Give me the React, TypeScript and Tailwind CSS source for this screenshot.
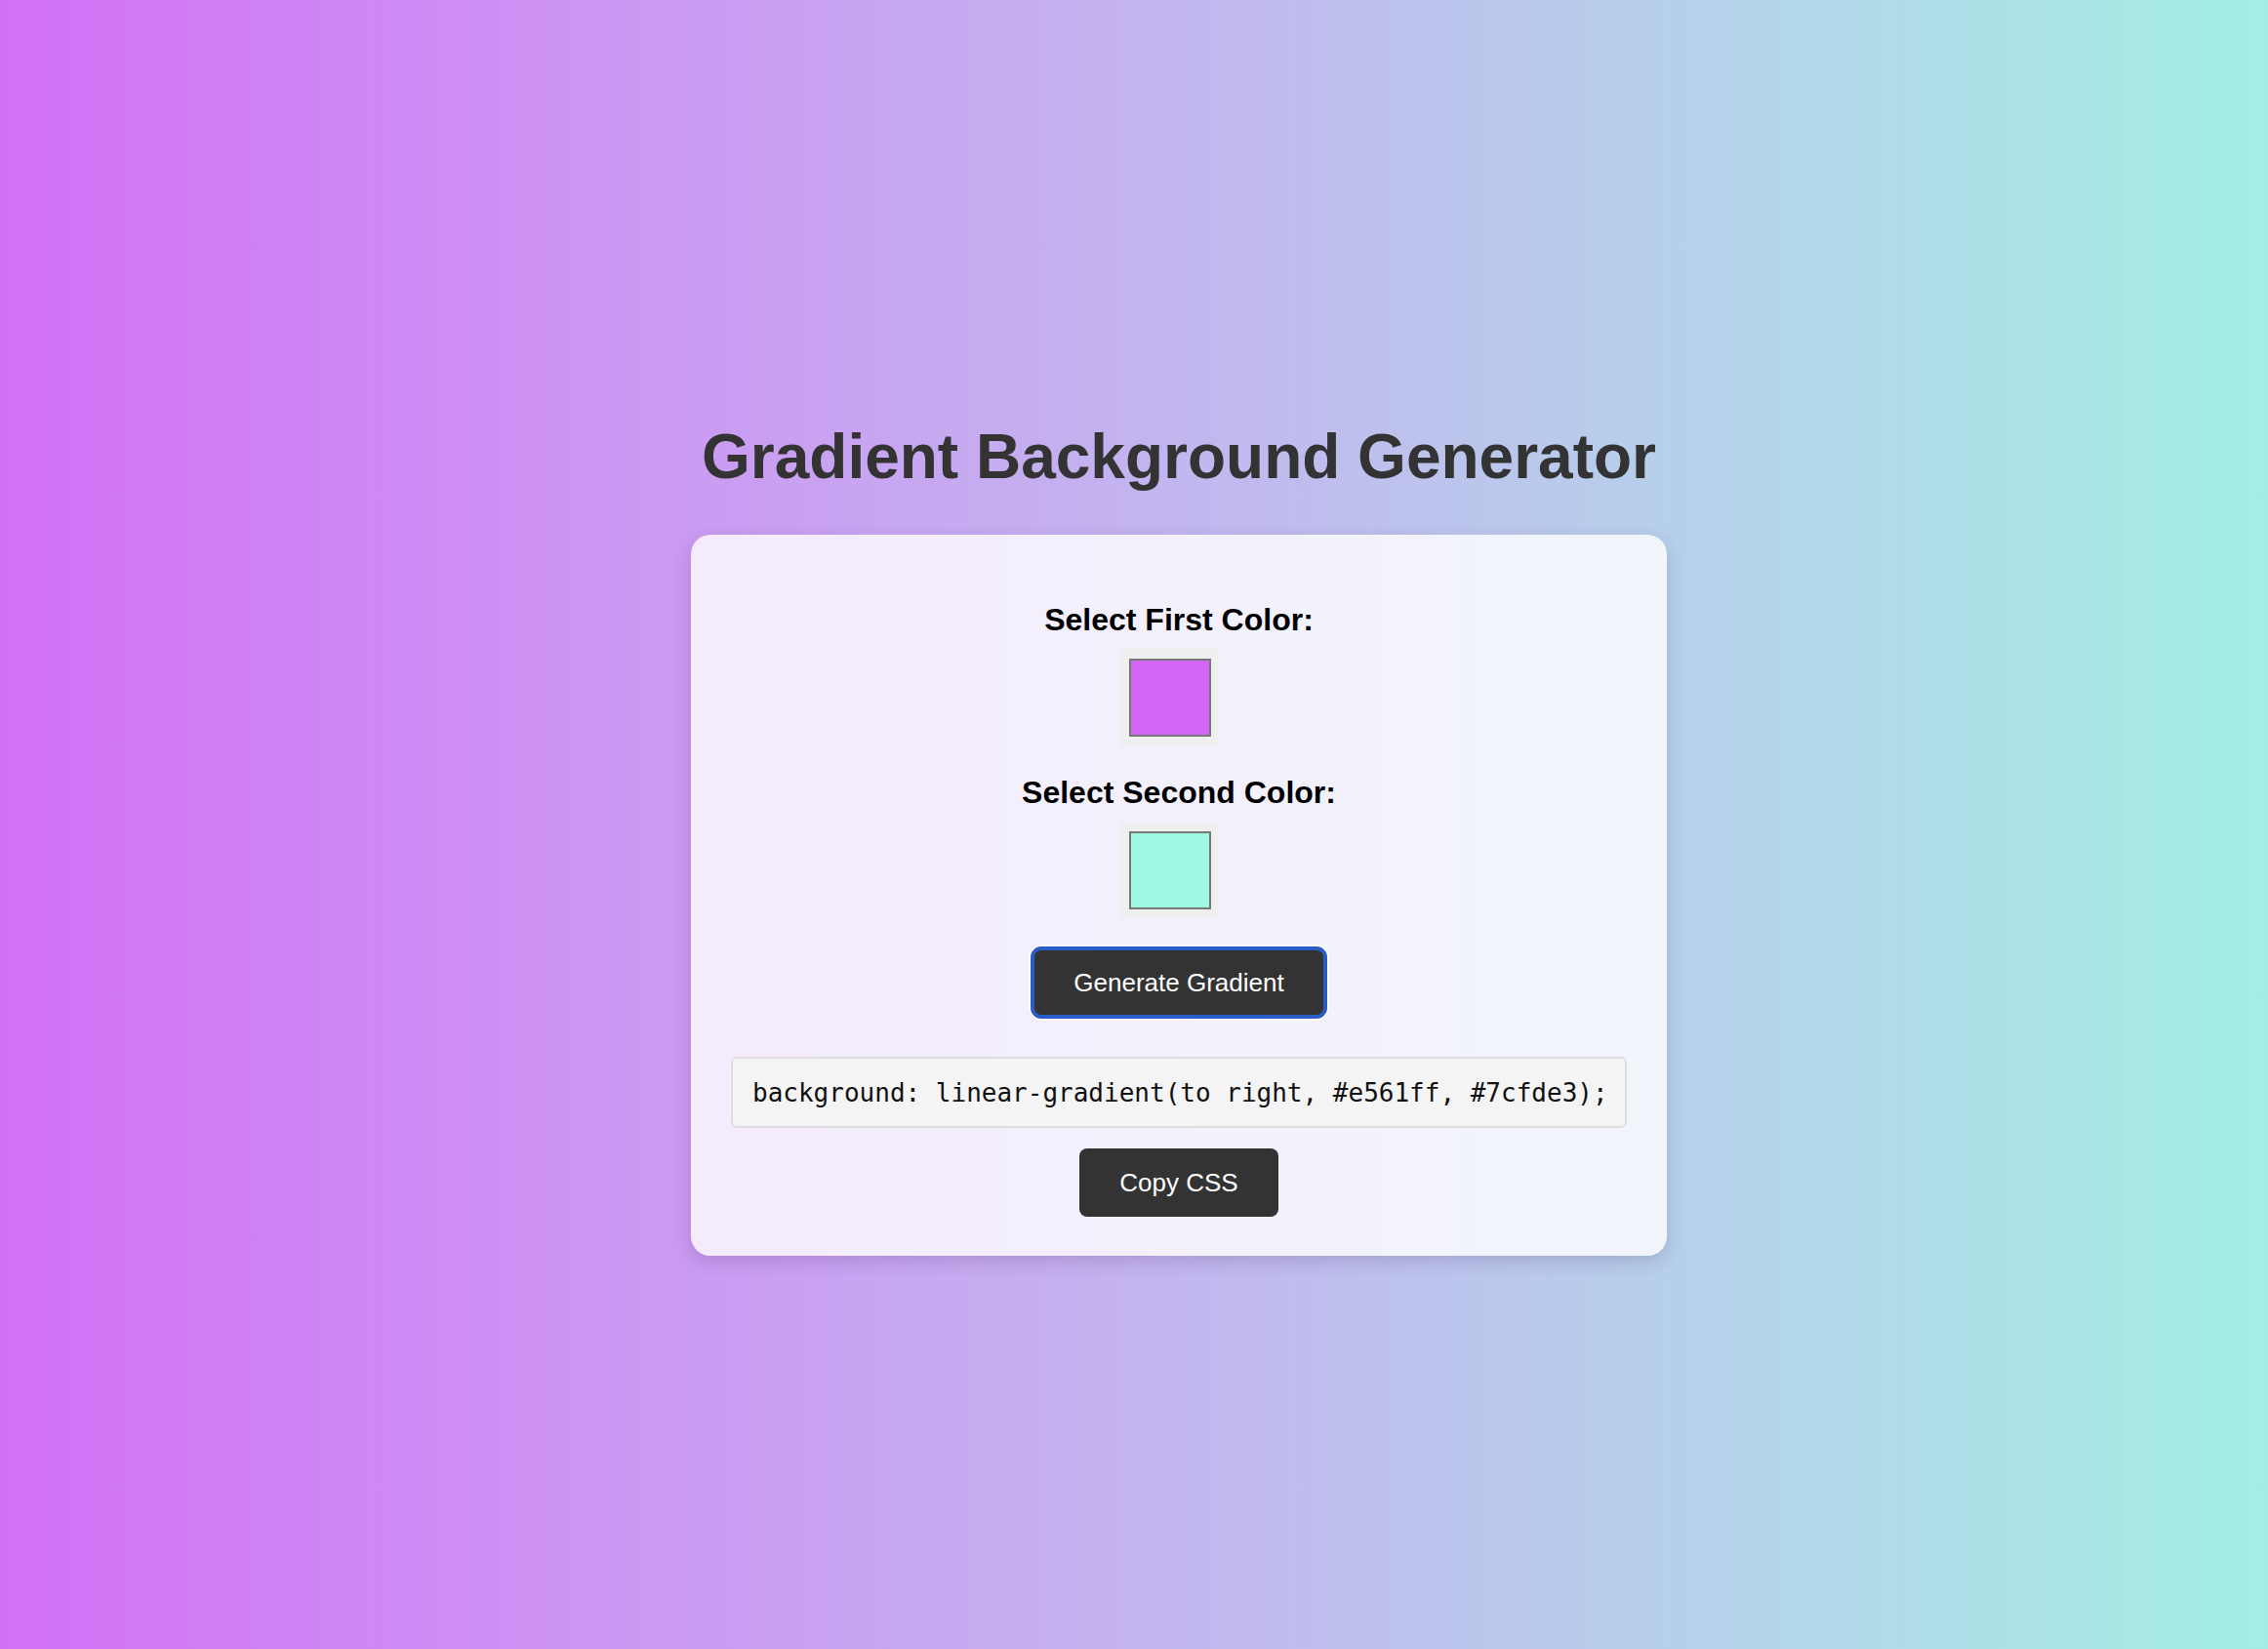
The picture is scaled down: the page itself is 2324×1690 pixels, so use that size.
const sans = { fontFamily: '"Liberation Sans", Arial, sans-serif' };

function Swatch({ color }: { color: string }) {
  return (
    <div className="mr-[19px] flex h-[100px] w-[100px] items-center justify-center bg-[#efefef]">
      <div className="h-[80px] w-[84px] border-2 border-[#777777]" style={{ backgroundColor: color }} />
    </div>
  );
}

export default function App() {
  return (
    <div
      className="h-screen overflow-hidden bg-gradient-to-r from-[#d26ff6] to-[#a2eee4] pl-[92px] pt-[431px]"
      style={sans}
    >
      <div className="flex flex-col items-center">
        <h1 className="mb-[43px] text-[64px] font-bold leading-[74px] text-[#333333]">
          Gradient Background Generator
        </h1>

        <div className="flex w-[1000px] flex-col items-center rounded-[20px] bg-white/80 px-[41px] pb-[40px] pt-[70px] shadow-[0_6px_18px_rgba(60,30,90,0.18)]">
          <label className="text-[32px] font-bold leading-[34px] text-black">Select First Color:</label>
          <div className="mt-[13px]">
            <Swatch color="#d466f5" />
          </div>

          <label className="mt-[30px] text-[32px] font-bold leading-[34px] text-black">Select Second Color:</label>
          <div className="mt-[13px]">
            <Swatch color="#9ff9e3" />
          </div>

          <button className="mt-[28px] flex h-[74px] w-[304px] items-center justify-center rounded-[11px] border-4 border-[#2a5cc8] bg-[#333333] text-[26px] leading-[30px] text-white shadow-[0_0_0_1.5px_#ffffff]">
            Generate Gradient
          </button>

          <div className="mt-[39px] w-full rounded-[6px] border-2 border-[#dedede] bg-[#f4f4f4] py-[19.5px] pl-[20px] text-left font-['DejaVu_Sans_Mono',monospace] text-[26px] leading-[30px] text-[#111111]">
            background: linear-gradient(to right, #e561ff, #7cfde3);
          </div>

          <button className="mt-[21px] flex h-[70px] items-center justify-center rounded-[8px] bg-[#333333] px-[41px] text-[26px] leading-[30px] text-white">
            Copy CSS
          </button>
        </div>
      </div>
    </div>
  );
}
